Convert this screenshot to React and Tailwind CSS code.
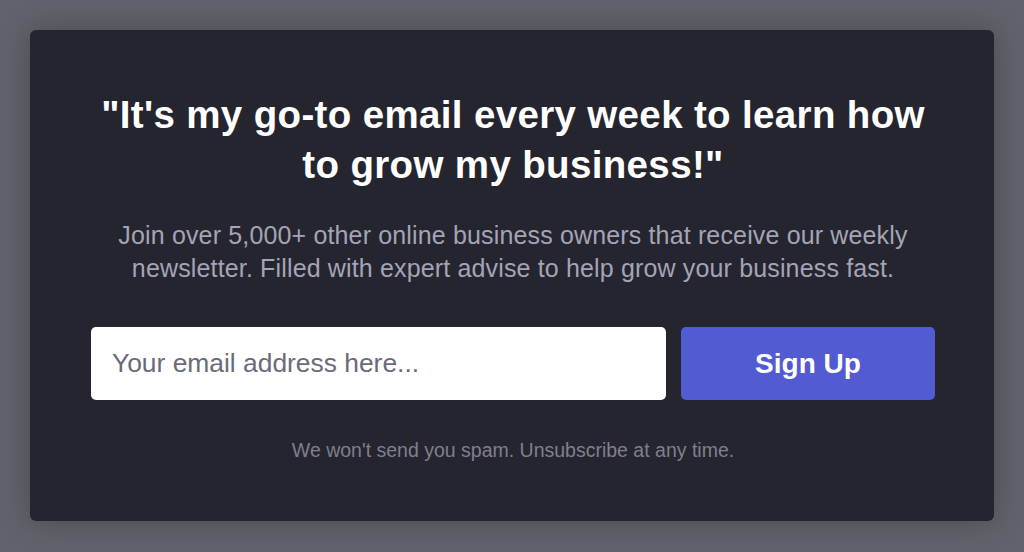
export default function App() {
  return (
    <div
      className="w-[1024px] h-[552px] bg-[#62626c] p-[30px] overflow-hidden"
      style={{ fontFamily: '"Liberation Sans", Arial, sans-serif' }}
    >
      <section className="h-[491px] bg-[#25252f] rounded-md shadow-[0_0_30px_rgba(0,0,0,0.25)] pl-[61px] pr-[59px] pt-[60px]">
        <h2 className="text-white text-[38.5px] leading-[50px] font-bold text-center tracking-[0.35px] whitespace-nowrap">
          "It's my go-to email every week to learn how
          <br />
          to grow my business!"
        </h2>
        <p className="mt-[29px] text-[#a4a4b6] text-[25px] leading-[33px] text-center tracking-[0.15px] whitespace-nowrap">
          Join over 5,000+ other online business owners that receive our weekly
          <br />
          newsletter. Filled with expert advise to help grow your business fast.
        </p>
        <form className="mt-[42px] flex gap-[15px]">
          <input
            type="email"
            placeholder="Your email address here..."
            className="flex-1 h-[73px] rounded-[5px] bg-white px-[21px] text-[26.4px] text-[#333] placeholder:text-[#6a6a78] outline-none"
          />
          <button
            type="button"
            className="w-[254px] h-[73px] rounded-[5px] bg-[#535bd2] text-white text-[28px] font-bold"
          >
            Sign Up
          </button>
        </form>
        <p className="mt-[36px] text-center text-[19.5px] text-[#7f7f8e]">
          We won't send you spam. Unsubscribe at any time.
        </p>
      </section>
    </div>
  );
}
